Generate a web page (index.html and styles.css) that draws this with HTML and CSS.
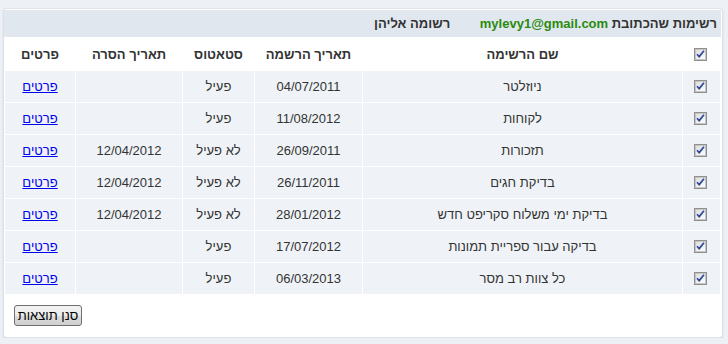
FILE: index.html
```html
<!DOCTYPE html>
<html lang="he" dir="rtl">
<head>
<meta charset="utf-8">
<title>רשימות</title>
<link rel="stylesheet" href="styles.css">
</head>
<body>
<svg width="0" height="0" class="defs" aria-hidden="true">
  <defs>
    <linearGradient id="cbg" x1="0" y1="0" x2="1" y2="1">
      <stop offset="0" stop-color="#dcdcdc"/>
      <stop offset="1" stop-color="#ffffff"/>
    </linearGradient>
    <symbol id="cb" viewBox="0 0 13 13">
      <rect x="0.5" y="0.5" width="12" height="12" fill="#f4f4f4" stroke="#8f8f8f"/>
      <rect x="1.5" y="1.5" width="10" height="10" fill="url(#cbg)" stroke="#c6c6c6"/>
      <path d="M3 6.2 L5.2 8.6 L10 2.8" fill="none" stroke="#2d4a9a" stroke-width="1.7"/>
    </symbol>
  </defs>
</svg>
<div class="card">
  <div class="bar">רשימות שהכתובת <span class="email">mylevy1@gmail.com</span> <span class="reg">רשומה אליהן</span></div>
  <table class="lists">
    <colgroup>
      <col class="c-check"><col class="c-name"><col class="c-date"><col class="c-status"><col class="c-remove"><col class="c-details">
    </colgroup>
    <thead>
      <tr>
        <th><svg class="cb"><use href="#cb"/></svg></th>
        <th>שם הרשימה</th>
        <th>תאריך הרשמה</th>
        <th>סטאטוס</th>
        <th>תאריך הסרה</th>
        <th>פרטים</th>
      </tr>
    </thead>
    <tbody>
      <tr><td><svg class="cb"><use href="#cb"/></svg></td><td>ניוזלטר</td><td>04/07/2011</td><td>פעיל</td><td></td><td><a href="#">פרטים</a></td></tr>
      <tr><td><svg class="cb"><use href="#cb"/></svg></td><td>לקוחות</td><td>11/08/2012</td><td>פעיל</td><td></td><td><a href="#">פרטים</a></td></tr>
      <tr><td><svg class="cb"><use href="#cb"/></svg></td><td>תזכורות</td><td>26/09/2011</td><td>לא פעיל</td><td>12/04/2012</td><td><a href="#">פרטים</a></td></tr>
      <tr><td><svg class="cb"><use href="#cb"/></svg></td><td>בדיקת חגים</td><td>26/11/2011</td><td>לא פעיל</td><td>12/04/2012</td><td><a href="#">פרטים</a></td></tr>
      <tr><td><svg class="cb"><use href="#cb"/></svg></td><td>בדיקת ימי משלוח סקריפט חדש</td><td>28/01/2012</td><td>לא פעיל</td><td>12/04/2012</td><td><a href="#">פרטים</a></td></tr>
      <tr><td><svg class="cb"><use href="#cb"/></svg></td><td>בדיקה עבור ספריית תמונות</td><td>17/07/2012</td><td>פעיל</td><td></td><td><a href="#">פרטים</a></td></tr>
      <tr><td><svg class="cb"><use href="#cb"/></svg></td><td>כל צוות רב מסר</td><td>06/03/2013</td><td>פעיל</td><td></td><td><a href="#">פרטים</a></td></tr>
    </tbody>
  </table>
  <div class="actions"><button class="btn" type="button">סנן תוצאות</button></div>
</div>
</body>
</html>
```
FILE: styles.css
```css
html, body {
  margin: 0;
  background: #edf0f4;
}
body {
  padding: 8px 4px 0 4px;
  font-family: "Liberation Sans", Arial, sans-serif;
  font-size: 13px;
  color: #333;
}
.defs {
  position: absolute;
  width: 0;
  height: 0;
}
.card {
  width: 717px;
  background: #fff;
  border: 1px solid #dde2e8;
  border-radius: 3px;
  padding: 1px 1px 11px 0;
  margin-right: 1px;
  box-shadow: 0 1px 2px rgba(0, 0, 0, 0.12);
}
.bar {
  height: 27px;
  line-height: 27px;
  background: #e0e7ef;
  padding-right: 4px;
  font-weight: bold;
  color: #333;
  white-space: nowrap;
}
.email {
  color: #2b8a0c;
}
.reg {
  margin-right: 26px;
}
.lists {
  width: 717px;
  table-layout: fixed;
  border-collapse: separate;
  border-spacing: 1px;
}
.c-check { width: 37px; }
.c-name { width: 319px; }
.c-date { width: 107px; }
.c-status { width: 71px; }
.c-remove { width: 106px; }
.c-details { width: 70px; }
.lists th,
.lists td {
  padding: 0;
  text-align: center;
  vertical-align: middle;
}
.lists th {
  height: 32px;
  font-weight: bold;
  background: #fff;
  color: #333;
}
.lists td {
  height: 31px;
  background: #eff3f7;
  color: #333;
}
.lists a {
  color: #0000ee;
  text-decoration: underline;
}
.cb {
  display: block;
  width: 13px;
  height: 13px;
  margin: 0 auto;
  position: relative;
  left: -1px;
}
.actions {
  padding: 10px 10px 0 0;
  display: flex;
  justify-content: flex-end;
}
.btn {
  font-family: "Liberation Sans", Arial, sans-serif;
  font-size: 13px;
  color: #000;
  height: 21px;
  width: 68px;
  padding: 0;
  margin-left: 10px;
  border: 1px solid #707070;
  border-radius: 3px;
  background: linear-gradient(#f3f3f3 0%, #ebebeb 50%, #dddddd 50%, #cfcfcf 100%);
}
```
